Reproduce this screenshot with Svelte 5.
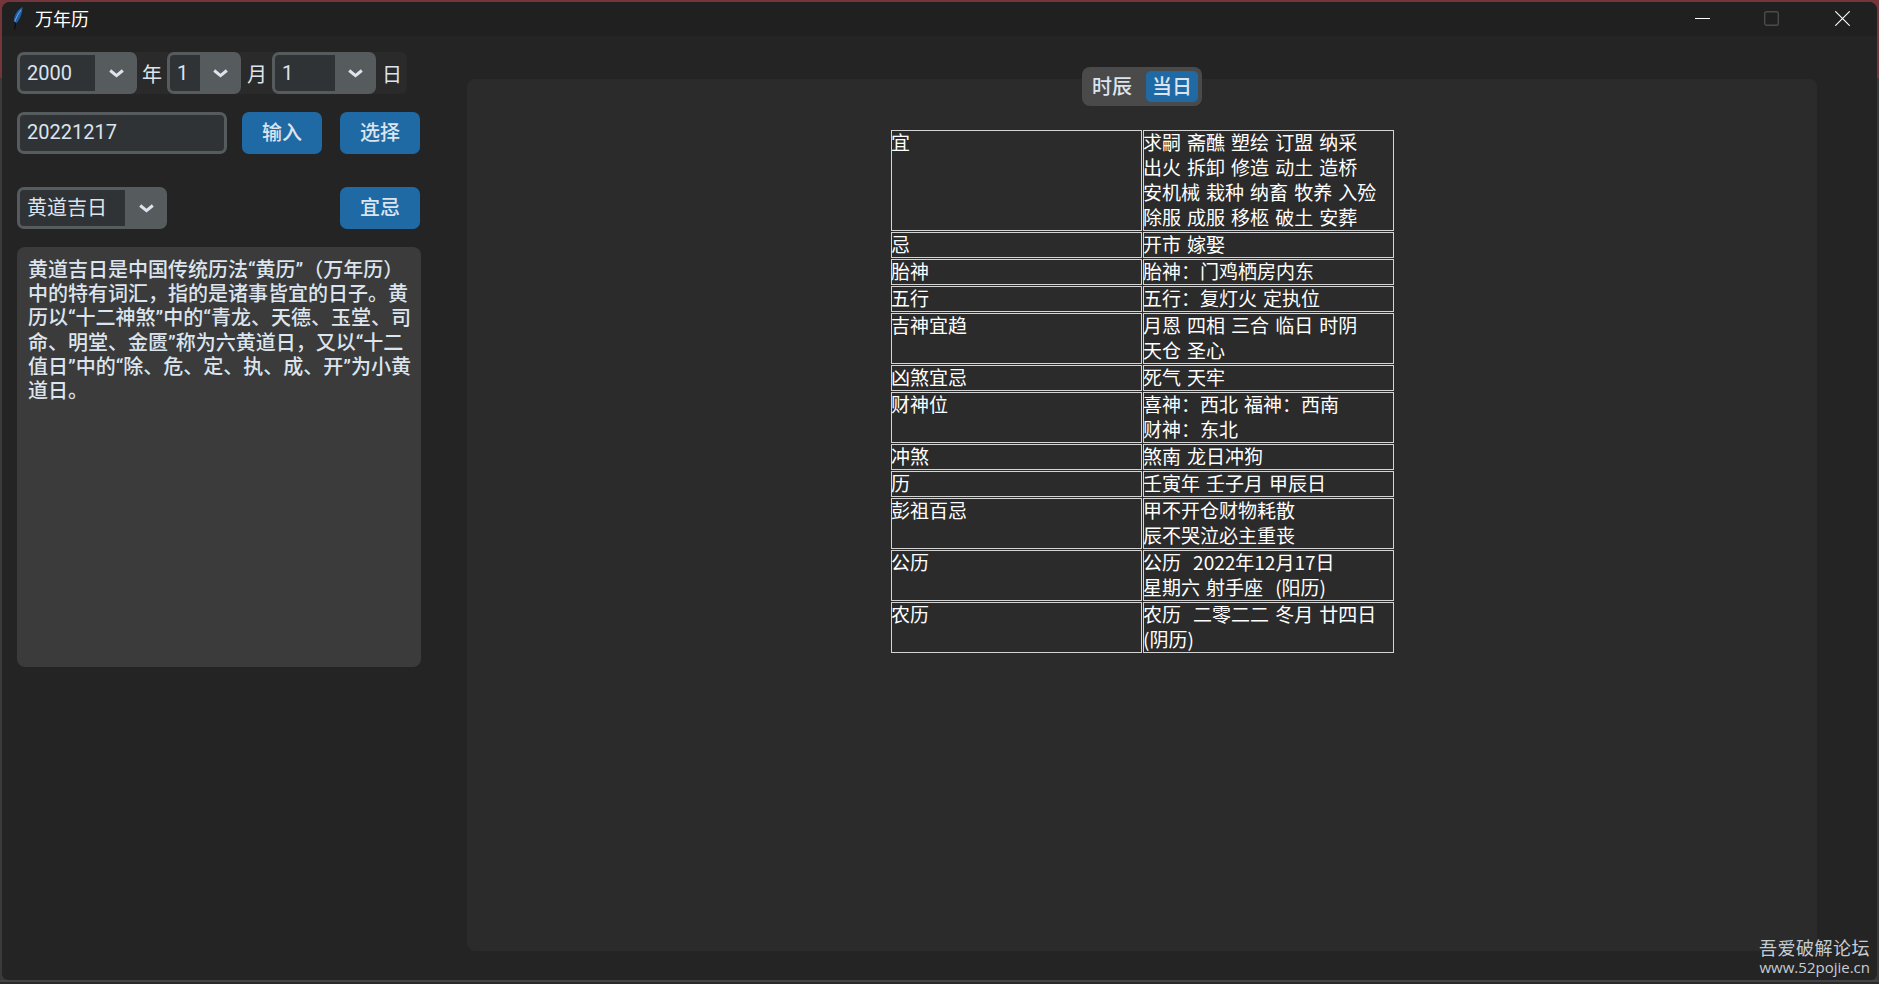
<script>
  const rows = [
    ['宜', ['求嗣 斋醮 塑绘 订盟 纳采', '出火 拆卸 修造 动土 造桥', '安机械 栽种 纳畜 牧养 入殓', '除服 成服 移柩 破土 安葬']],
    ['忌', ['开市 嫁娶']],
    ['胎神', ['胎神：门鸡栖房内东']],
    ['五行', ['五行：复灯火 定执位']],
    ['吉神宜趋', ['月恩 四相 三合 临日 时阴', '天仓 圣心']],
    ['凶煞宜忌', ['死气 天牢']],
    ['财神位', ['喜神：西北 福神：西南', '财神：东北']],
    ['冲煞', ['煞南 龙日冲狗']],
    ['历', ['壬寅年 壬子月 甲辰日']],
    ['彭祖百忌', ['甲不开仓财物耗散', '辰不哭泣必主重丧']],
    ['公历', ['公历  2022年12月17日', '星期六 射手座  (阳历)']],
    ['农历', ['农历  二零二二 冬月 廿四日', '(阴历)']]
  ];
  const desc = '黄道吉日是中国传统历法“黄历”（万年历）中的特有词汇，指的是诸事皆宜的日子。黄历以“十二神煞”中的“青龙、天德、玉堂、司命、明堂、金匮”称为六黄道日，又以“十二值日”中的“除、危、定、执、成、开”为小黄道日。';
</script>

{#snippet combo(value, inner, arrow)}
  <div class="combo">
    <span class="combo-value" style="width: {inner}px">{value}</span>
    <span class="combo-arrow" style="width: {arrow}px">
      <svg width="15" height="9" viewBox="0 0 15 9"><path d="M1.2 1.5 L7.5 6.6 L13.8 1.5" fill="none" stroke="#dce4ee" stroke-width="3" /></svg>
    </span>
  </div>
{/snippet}

<div class="desktop">
  <div class="window">
    <header class="titlebar">
      <svg class="feather" width="12" height="24" viewBox="0 0 12 24">
        <path d="M10.5 1 C6 3 2 9 1.8 15 L3.5 18 C7.5 14 10.5 8 10.5 1 Z" fill="#1f5fa8" />
        <path d="M2.2 15 L3.5 18 L2.5 23.5" fill="none" stroke="#0b0b0b" stroke-width="1.2" />
        <path d="M9 4 C6 8 4.5 11 2.6 16" fill="none" stroke="#9fc4ea" stroke-width="0.7" />
      </svg>
      <span class="title">万年历</span>
      <div class="controls">
        <svg width="15" height="15" viewBox="0 0 15 15"><path d="M0 7.5 H15" stroke="#fff" stroke-width="1" /></svg>
        <svg class="ctl-max" width="15" height="15" viewBox="0 0 15 15"><rect x="0.7" y="0.7" width="13.6" height="13.6" rx="2" fill="none" stroke="#4b4b4b" stroke-width="1.4" /></svg>
        <svg class="ctl-close" width="15" height="15" viewBox="0 0 15 15"><path d="M0.3 0.3 L14.7 14.7 M14.7 0.3 L0.3 14.7" stroke="#fff" stroke-width="1.1" /></svg>
      </div>
    </header>

    <main class="content">
      <section class="left">
        <div class="date-row">
          {@render combo('2000', 75, 39)}
          <span class="unit unit-y">年</span>
          {@render combo('1', 30, 38)}
          <span class="unit unit-m">月</span>
          {@render combo('1', 60, 38)}
          <span class="unit unit-d">日</span>
        </div>

        <div class="input-row">
          <div class="entry">20221217</div>
          <button class="btn first">输入</button>
          <button class="btn">选择</button>
        </div>

        <div class="pick-row">
          {@render combo('黄道吉日', 105, 39)}
          <button class="btn">宜忌</button>
        </div>

        <div class="textbox">{desc}</div>
      </section>

      <section class="right">
        <div class="segment">
          <span class="seg-item first">时辰</span>
          <span class="seg-item active">当日</span>
        </div>
        <div class="panel">
          <table>
            <tbody>
              {#each rows as [name, lines]}
                <tr>
                  <td><div class="line">{name}</div></td>
                  <td>
                    {#each lines as line}
                      <div class="line">{line}</div>
                    {/each}
                  </td>
                </tr>
              {/each}
            </tbody>
          </table>
        </div>
      </section>
    </main>
  </div>

  <div class="watermark">
    <div class="wm-cn">吾爱破解论坛</div>
    <div class="wm-url">www.52pojie.cn</div>
  </div>
</div>

<style>
  :global(body) {
    margin: 0;
    background: #2c2c2c;
    overflow: hidden;
  }

  .desktop {
    position: relative;
    width: 1879px;
    height: 984px;
    box-sizing: border-box;
    padding: 2px;
    background: linear-gradient(#74363a 0 78px, #3a3a3a 78px 980px, #444 980px 982px, #2a2a2a 982px);
    font-family: Roboto, "Noto Sans CJK SC", sans-serif;
    color: #dce4ee;
  }

  .window {
    height: 978px;
    display: flex;
    flex-direction: column;
    background: #242424;
    border-radius: 8px 8px 6px 6px;
    overflow: hidden;
  }

  .titlebar {
    height: 34px;
    flex: none;
    display: flex;
    align-items: center;
    background: #202020;
  }

  .feather {
    margin-left: 10px;
    margin-top: -2px;
  }

  .title {
    margin-left: 11px;
    margin-top: -3px;
    font-size: 18px;
    color: #fff;
    font-family: "Noto Sans CJK SC", sans-serif;
  }

  .controls {
    margin-left: auto;
    margin-top: -2px;
    display: flex;
    align-items: center;
    padding-right: 27px;
  }

  .ctl-max {
    margin: 0 56px 0 54px;
  }

  .content {
    flex: 1;
    display: flex;
    min-height: 0;
  }

  .left {
    width: 465px;
    flex: none;
    box-sizing: border-box;
    padding: 16px 0 0 15px;
  }

  .date-row {
    width: 390px;
    height: 42px;
    display: flex;
    align-items: center;
    background: #2a2a2a;
    border-radius: 6px;
  }

  .combo {
    display: flex;
    height: 42px;
    box-sizing: border-box;
    border: 3px solid #565b5e;
    border-radius: 7px;
    background: #565b5e;
    flex: none;
  }

  .combo-value {
    box-sizing: border-box;
    padding-left: 7px;
    background: #303336;
    border-radius: 4px 0 0 4px;
    font-size: 20px;
    line-height: 36px;
    white-space: nowrap;
  }

  .combo-arrow {
    display: flex;
    align-items: center;
    justify-content: center;
    box-sizing: border-box;
    padding-left: 3px;
  }

  .unit {
    font-size: 20px;
    flex: none;
    width: 20px;
    text-align: center;
  }

  .unit-y {
    margin: 0 5px;
  }

  .unit-m {
    margin: 0 5px 0 6px;
  }

  .unit-d {
    margin-left: 6px;
  }

  .input-row {
    display: flex;
    margin-top: 18px;
  }

  .entry {
    width: 210px;
    height: 42px;
    box-sizing: border-box;
    border: 3px solid #565b5e;
    border-radius: 7px;
    background: #303336;
    padding-left: 7px;
    font-size: 20px;
    line-height: 34px;
  }

  .btn {
    width: 80px;
    height: 42px;
    padding: 0 0 3px;
    margin-left: 18px;
    border: none;
    border-radius: 7px;
    background: #1f6aa5;
    color: #dce4ee;
    font-family: "Noto Sans CJK SC", sans-serif;
    font-size: 20px;
    font-weight: 500;
  }

  .btn.first {
    margin-left: 15px;
  }

  .pick-row {
    display: flex;
    justify-content: space-between;
    width: 403px;
    margin-top: 33px;
  }

  .textbox {
    width: 404px;
    height: 420px;
    box-sizing: border-box;
    margin-top: 18px;
    padding: 11px 9px 11px 11px;
    background: #3b3b3b;
    border-radius: 8px;
    font-size: 20px;
    font-weight: 500;
    line-height: 24.2px;
    text-spacing-trim: space-all;
  }

  .right {
    width: 1350px;
    flex: none;
    display: flex;
    flex-direction: column;
    align-items: center;
    padding-top: 31px;
  }

  .segment {
    position: relative;
    z-index: 1;
    width: 120px;
    height: 39px;
    box-sizing: border-box;
    display: flex;
    align-items: center;
    padding: 4px;
    background: #4a4a4a;
    border-radius: 8px;
    flex: none;
  }

  .seg-item {
    width: 52px;
    height: 31px;
    line-height: 30px;
    text-align: center;
    font-size: 20px;
    font-weight: 500;
    color: #dce4ee;
    border-radius: 5px;
    font-family: "Noto Sans CJK SC", sans-serif;
  }

  .seg-item.first {
    margin-right: 8px;
  }

  .seg-item.active {
    background: #1f6aa5;
  }

  .panel {
    align-self: stretch;
    margin-top: -27px;
    height: 872px;
    box-sizing: border-box;
    padding-top: 50px;
    background: #2b2b2b;
    border-radius: 8px;
    display: flex;
    justify-content: center;
    align-items: flex-start;
  }

  table {
    width: 505px;
    margin-left: 1px;
    table-layout: fixed;
    border-collapse: separate;
    border-spacing: 1px;
    font-family: "Noto Sans CJK SC", sans-serif;
    font-size: 19px;
    word-spacing: 1.8px;
    color: #fff;
  }

  td {
    padding: 0 0 1px;
    vertical-align: top;
    border: 1px solid #d4d4d4;
  }

  .line {
    margin-left: -1px;
    line-height: 25px;
    white-space: pre;
  }

  /* rows run tighter than their line boxes, text sits on the top border */
  .line:first-child {
    margin-top: -2px;
  }

  .watermark {
    position: absolute;
    right: 9px;
    bottom: 7px;
    text-align: right;
    color: #c4ccd4;
    font-family: "Noto Sans CJK SC", sans-serif;
  }

  .wm-cn {
    font-size: 18px;
    line-height: 22px;
    letter-spacing: 0.5px;
  }

  .wm-url {
    font-family: "Open Sans", sans-serif;
    font-size: 15px;
    line-height: 19px;
  }
</style>
